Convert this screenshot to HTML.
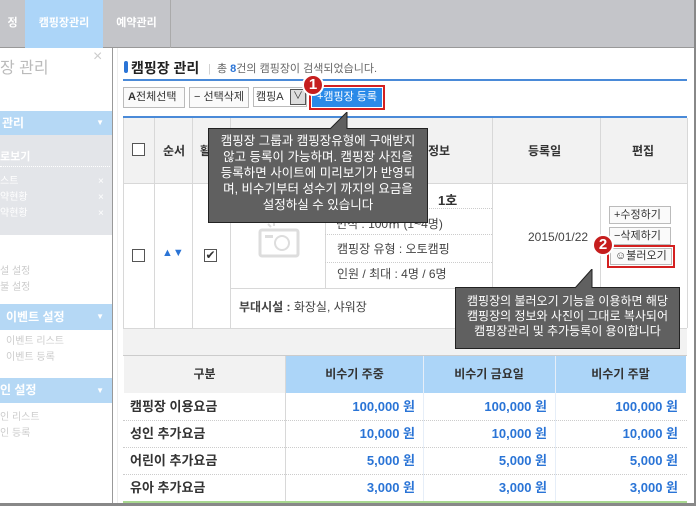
<!DOCTYPE html>
<html><head><meta charset="utf-8"><style>
*{margin:0;padding:0;box-sizing:border-box}
body{width:696px;height:506px;overflow:hidden;background:#fff;font-family:"Liberation Sans","Noto Sans CJK KR","NanumGothic",sans-serif;font-size:12px;color:#333;position:relative}
.a{position:absolute}
.b{font-weight:bold}
.tip{background:#606060;border:1px solid #222;color:#fff;font-size:12px;line-height:15px;text-align:center;white-space:nowrap}
.btn{border:1px solid #bbb;background:#fafafa;height:21px;line-height:19px;font-size:11px;padding:0 4px;color:#333}
.num{width:22px;height:22px;border-radius:50%;background:#c61e1e;color:#fff;font-weight:bold;text-align:center;line-height:18px;font-size:15px;border:2px solid #fff}
.pr{color:#2a74d6;font-weight:bold;text-align:right;font-size:13px;line-height:16px}
.vl{width:1px;background:#d8d8d8}
.hl{height:1px;background:#d8d8d8}
.dl{height:0;border-top:1px dotted #ccc}
</style></head><body>
<div class="a" style="left:0;top:0;width:696px;height:48px;background:#c4c5c9;border-bottom:1px solid #999"></div>
<div class="a" style="left:0;top:0;width:25px;height:48px;color:#fff;font-size:11px;line-height:46px;font-weight:bold;text-align:center">정</div>
<div class="a" style="left:25px;top:0;width:78px;height:48px;background:#acd5f8;color:#fff;font-size:11px;line-height:46px;font-weight:bold;text-align:center">캠핑장관리</div>
<div class="a" style="left:103px;top:0;width:68px;height:48px;color:#fff;font-size:11px;line-height:46px;font-weight:bold;text-align:center;border-right:1px solid #aaa">예약관리</div>
<div class="a" style="left:694px;top:0;width:2px;height:506px;background:#888"></div>
<div class="a" style="left:0;top:503px;width:696px;height:3px;background:#888"></div>
<div class="a" style="left:112px;top:48px;width:1px;height:455px;background:#999"></div>
<div class="a" style="left:117px;top:48px;width:1px;height:455px;background:#eee"></div>
<div class="a" style="left:0;top:54px;color:#bbb;font-size:16px">장 관리</div>
<div class="a" style="left:93px;top:48px;color:#ccc;font-size:16px">×</div>
<div class="a" style="left:0;top:111px;width:112px;height:24px;background:#b5d8f5;color:#fff;font-weight:bold;line-height:24px;padding-left:2px">관리<span style="float:right;margin-right:8px;font-size:8px">▼</span></div>
<div class="a" style="left:0;top:135px;width:112px;height:100px;background:#e3e5e9"></div>
<div class="a" style="left:0;top:148px;color:#fff;font-weight:bold;font-size:11px">로보기</div>
<div class="a" style="left:0;top:166px;width:110px;border-top:1px dotted #fff"></div>
<div class="a" style="left:0;top:174px;color:#fff;font-size:10px;line-height:16px">스트<br>약현황<br>약현황</div>
<div class="a" style="left:98px;top:174px;color:#fff;font-size:10px;line-height:16px">×<br>×<br>×</div>
<div class="a" style="left:0;top:264px;color:#ccc;font-size:10px;line-height:16px">설 설정<br>불 설정</div>
<div class="a" style="left:0;top:304px;width:112px;height:26px;background:#b5d8f5;color:#fff;font-weight:bold;line-height:26px;padding-left:6px">이벤트 설정<span style="float:right;margin-right:8px;font-size:8px">▼</span></div>
<div class="a" style="left:6px;top:334px;color:#ccc;font-size:10px;line-height:16px">이벤트 리스트<br>이벤트 등록</div>
<div class="a" style="left:0;top:378px;width:112px;height:25px;background:#b5d8f5;color:#fff;font-weight:bold;line-height:25px">인 설정<span style="float:right;margin-right:8px;font-size:8px">▼</span></div>
<div class="a" style="left:0;top:410px;color:#ccc;font-size:10px;line-height:16px">인 리스트<br>인 등록</div>
<div class="a" style="left:124px;top:61px;width:4px;height:12px;background:#2a74d6;border-radius:2px"></div>
<div class="a b" style="left:131px;top:58px;font-size:14px;color:#222">캠핑장 관리</div>
<div class="a" style="left:208px;top:60px;font-size:11px;color:#666"><span style="color:#ccc">|</span>&nbsp; 총 <b style="color:#2a74d6">8</b>건의 캠핑장이 검색되었습니다.</div>
<div class="a" style="left:123px;top:79px;width:564px;height:2px;background:#4a8ad8"></div>
<div class="a btn" style="left:123px;top:87px;width:62px"><b>A</b>전체선택</div>
<div class="a btn" style="left:189px;top:87px;width:60px">− 선택삭제</div>
<div class="a" style="left:253px;top:87px;width:54px;height:20px;border:1px solid #bbb;font-size:11px;line-height:18px;padding-left:2px">캠핑A<span style="position:absolute;right:0;top:1px;width:16px;height:16px;border:1px solid #555;background:#ddd;text-align:center;line-height:14px;font-size:10px">∨</span></div>
<div class="a" style="left:309px;top:85px;width:76px;height:25px;border:2px solid #d42020;background:#fff"></div>
<div class="a" style="left:312px;top:88px;width:70px;height:19px;background:#2a8ae8;color:#fff;font-size:11px;line-height:19px;text-align:center">+캠핑장 등록</div>
<div class="a num" style="left:302px;top:74px">1</div>
<div class="a" style="left:123px;top:116px;width:564px;height:2px;background:#4a8ad8"></div>
<div class="a" style="left:123px;top:118px;width:564px;height:65px;background:#f2f2f2"></div>
<div class="a" style="left:123px;top:328px;width:564px;height:27px;background:#f2f2f2"></div>
<div class="a hl" style="left:123px;top:183px;width:564px"></div>
<div class="a hl" style="left:230px;top:288px;width:370px"></div>
<div class="a hl" style="left:123px;top:328px;width:564px"></div>
<div class="a vl" style="left:123px;top:118px;height:210px"></div>
<div class="a vl" style="left:154px;top:118px;height:210px"></div>
<div class="a vl" style="left:192px;top:118px;height:210px"></div>
<div class="a vl" style="left:230px;top:118px;height:210px"></div>
<div class="a vl" style="left:325px;top:183px;height:105px"></div>
<div class="a vl" style="left:492px;top:118px;height:170px"></div>
<div class="a vl" style="left:600px;top:118px;height:210px"></div>
<div class="a vl" style="left:687px;top:118px;height:210px"></div>
<div class="a" style="left:132px;top:143px;width:13px;height:13px;border:1px solid #555;background:#fff"></div>
<div class="a b" style="left:163px;top:142px">순서</div>
<div class="a b" style="left:200px;top:142px">활</div>
<div class="a b" style="left:428px;top:142px">정보</div>
<div class="a b" style="left:528px;top:142px">등록일</div>
<div class="a b" style="left:632px;top:142px">편집</div>
<div class="a" style="left:132px;top:249px;width:13px;height:13px;border:1px solid #555;background:#fff"></div>
<div class="a" style="left:162px;top:247px;color:#2a74d6;font-size:11px">▲▼</div>
<div class="a" style="left:204px;top:249px;width:13px;height:13px;border:1px solid #555;background:#fff;font-size:12px;line-height:11px;text-align:center">✔</div>
<svg class="a" style="left:258px;top:220px" width="44" height="38"><rect x="2" y="10" width="38" height="26" rx="2" fill="none" stroke="#ddd" stroke-width="3"/><circle cx="24" cy="23" r="7" fill="none" stroke="#ddd" stroke-width="2"/><rect x="7" y="15" width="8" height="3" fill="#ddd"/><path d="M10 4 l3 3 M16 2 v4" stroke="#ddd" stroke-width="2"/></svg>
<div class="a b" style="left:438px;top:190px;font-size:13px">1호</div>
<div class="a dl" style="left:325px;top:208px;width:167px"></div>
<div class="a" style="left:336px;top:215px;color:#444">면적 : 100㎡ (1~4명)</div>
<div class="a dl" style="left:325px;top:234px;width:167px"></div>
<div class="a" style="left:337px;top:240px;color:#444">캠핑장 유형 : 오토캠핑</div>
<div class="a dl" style="left:325px;top:262px;width:167px"></div>
<div class="a" style="left:337px;top:265px;color:#444">인원 / 최대 : 4명 / 6명</div>
<div class="a" style="left:528px;top:230px;color:#444">2015/01/22</div>
<div class="a btn" style="left:609px;top:206px;width:62px;height:18px;line-height:16px">+수정하기</div>
<div class="a btn" style="left:609px;top:227px;width:62px;height:18px;line-height:16px">−삭제하기</div>
<div class="a" style="left:607px;top:245px;width:68px;height:23px;border:2px solid #d42020;background:#fff"></div>
<div class="a btn" style="left:610px;top:248px;width:62px;height:17px;line-height:15px">☺불러오기</div>
<div class="a num" style="left:592px;top:234px">2</div>
<div class="a" style="left:239px;top:298px;color:#444"><b>부대시설 :</b> 화장실, 샤워장</div>
<div class="a" style="left:123px;top:355px;width:564px;height:1px;background:#ccc"></div>
<div class="a" style="left:124px;top:356px;width:161px;height:37px;background:#f2f2f2;text-align:center;line-height:37px;font-weight:bold">구분</div>
<div class="a" style="left:286px;top:356px;width:400px;height:37px;background:#acd5f8"></div>
<div class="a b" style="left:286px;top:356px;width:137px;line-height:37px;text-align:center">비수기 주중</div>
<div class="a b" style="left:423px;top:356px;width:132px;line-height:37px;text-align:center">비수기 금요일</div>
<div class="a b" style="left:555px;top:356px;width:131px;line-height:37px;text-align:center">비수기 주말</div>
<div class="a vl" style="left:285px;top:356px;height:146px"></div>
<div class="a vl" style="left:423px;top:356px;height:146px;background:#e6eef8"></div>
<div class="a vl" style="left:555px;top:356px;height:146px;background:#e6eef8"></div>
<div class="a dl" style="left:123px;top:420px;width:564px"></div>
<div class="a dl" style="left:123px;top:447px;width:564px"></div>
<div class="a dl" style="left:123px;top:474px;width:564px"></div>
<div class="a" style="left:123px;top:501px;width:564px;height:2px;background:#a8d890"></div>
<div class="a b" style="left:130px;top:399px;font-size:13px;line-height:16px">캠핑장 이용요금</div>
<div class="a b" style="left:130px;top:426px;font-size:13px;line-height:16px">성인 추가요금</div>
<div class="a b" style="left:130px;top:453px;font-size:13px;line-height:16px">어린이 추가요금</div>
<div class="a b" style="left:130px;top:480px;font-size:13px;line-height:16px">유아 추가요금</div>
<div class="a pr" style="left:286px;top:399px;width:129px">100,000 원</div>
<div class="a pr" style="left:286px;top:426px;width:129px">10,000 원</div>
<div class="a pr" style="left:286px;top:453px;width:129px">5,000 원</div>
<div class="a pr" style="left:286px;top:480px;width:129px">3,000 원</div>
<div class="a pr" style="left:423px;top:399px;width:124px">100,000 원</div>
<div class="a pr" style="left:423px;top:426px;width:124px">10,000 원</div>
<div class="a pr" style="left:423px;top:453px;width:124px">5,000 원</div>
<div class="a pr" style="left:423px;top:480px;width:124px">3,000 원</div>
<div class="a pr" style="left:555px;top:399px;width:123px">100,000 원</div>
<div class="a pr" style="left:555px;top:426px;width:123px">10,000 원</div>
<div class="a pr" style="left:555px;top:453px;width:123px">5,000 원</div>
<div class="a pr" style="left:555px;top:480px;width:123px">3,000 원</div>
<div class="a tip" style="left:208px;top:128px;width:220px;height:95px;padding-top:4px;font-size:12.5px;line-height:16px">캠핑장 그룹과 캠핑장유형에 구애받지<br>않고 등록이 가능하며. 캠핑장 사진을<br>등록하면 사이트에 미리보기가 반영되<br>며, 비수기부터 성수기 까지의 요금을<br>설정하실 수 있습니다</div>
<svg class="a" style="left:330px;top:112px" width="30" height="18"><polygon points="0,17 17,0 17,17" fill="#606060"/><path d="M0 17 L17 0 L17 17" fill="none" stroke="#222"/></svg>
<div class="a tip" style="left:455px;top:287px;width:225px;height:62px;padding-top:6px;font-size:12px;line-height:15px">캠핑장의 불러오기 기능을 이용하면 해당<br>캠핑장의 정보와 사진이 그대로 복사되어<br>캠핑장관리 및 추가등록이 용이합니다</div>
<svg class="a" style="left:575px;top:269px" width="20" height="20"><polygon points="0,19 17,0 17,19" fill="#606060"/><path d="M0 19 L17 0 L17 19" fill="none" stroke="#222"/></svg>
</body></html>
